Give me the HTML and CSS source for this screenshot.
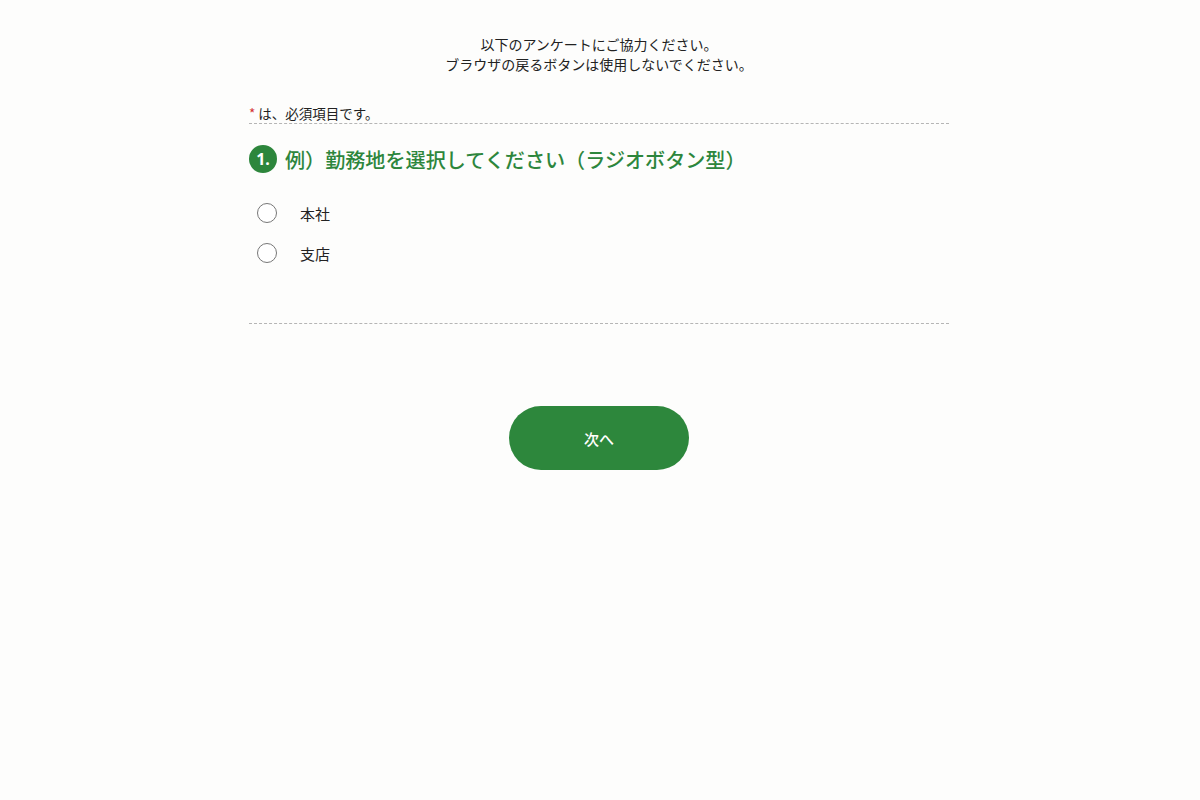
FILE: index.html
```html
<!DOCTYPE html>
<html lang="ja">
<head>
<meta charset="utf-8">
<title>アンケート</title>
<link rel="stylesheet" href="styles.css">
</head>
<body>
<main class="survey">
  <div class="intro">
    <p>以下のアンケートにご協力ください。</p>
    <p>ブラウザの戻るボタンは使用しないでください。</p>
  </div>
  <p class="required"><span class="star">*</span> は、必須項目です。</p>
  <section class="question">
    <h2 class="q-title"><span class="badge">1.</span>例）勤務地を選択してください（ラジオボタン型）</h2>
    <ul class="options">
      <li class="option"><span class="radio"></span><span class="label">本社</span></li>
      <li class="option"><span class="radio"></span><span class="label">支店</span></li>
    </ul>
  </section>
  <div class="actions">
    <button class="next" type="button">次へ</button>
  </div>
</main>
</body>
</html>
```
FILE: styles.css
```css
html, body {
  margin: 0;
  padding: 0;
  background: #fdfdfc;
}
body {
  font-family: "Noto Sans CJK JP", "Noto Sans", sans-serif;
  color: #222;
  padding-right: 2px;
}
.survey {
  width: 700px;
  margin: 0 auto;
  padding-top: 34px;
}
.intro {
  text-align: center;
  font-size: 14px;
  line-height: 20px;
}
.intro p {
  margin: 0;
}
.required {
  margin: 29px 0 0;
  font-size: 13.5px;
  line-height: 20px;
  border-bottom: 1px dashed #b5b5b5;
}
.star {
  color: #d32f2f;
}
.question {
  padding-top: 21px;
  border-bottom: 1px dashed #b5b5b5;
  padding-bottom: 50px;
}
.q-title {
  margin: 0;
  display: flex;
  align-items: center;
  gap: 8px;
  height: 28px;
  font-size: 20.1px;
  font-weight: 500;
  color: #2d863c;
}
.badge {
  display: inline-flex;
  align-items: center;
  justify-content: center;
  width: 28px;
  height: 28px;
  border-radius: 50%;
  background: #2d863c;
  color: #fff;
  font-family: "Noto Sans", sans-serif;
  font-size: 16px;
  font-weight: 700;
}
.options {
  list-style: none;
  margin: 20px 0 0;
  padding: 0;
}
.option {
  display: flex;
  align-items: center;
  height: 40px;
  padding-left: 8px;
}
.radio {
  box-sizing: border-box;
  width: 20px;
  height: 20px;
  border-radius: 50%;
  border: 1px solid #777;
  background: #fff;
}
.label {
  margin-left: 23px;
  font-size: 15px;
  color: #222;
}
.actions {
  display: flex;
  justify-content: center;
  padding-top: 82px;
}
.next {
  width: 180px;
  height: 64px;
  border: none;
  border-radius: 32px;
  background: #2d873c;
  color: #fff;
  font-family: "Noto Sans CJK JP", sans-serif;
  font-size: 15px;
  font-weight: 500;
  cursor: pointer;
}
```
